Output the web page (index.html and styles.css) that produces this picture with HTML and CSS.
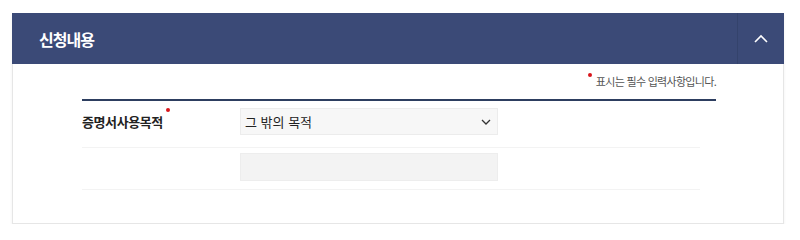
FILE: index.html
```html
<!DOCTYPE html>
<html lang="ko">
<head>
<meta charset="utf-8">
<link rel="stylesheet" href="styles.css">
</head>
<body>
<section class="card">
  <header class="card-head">
    <h2 class="card-title">신청내용</h2>
    <button class="toggle" type="button" aria-label="접기">
      <svg width="14" height="9" viewBox="0 0 14 9"><path d="M1 8 L7 2 L13 8" fill="none" stroke="#fff" stroke-width="1.6"/></svg>
    </button>
  </header>
  <div class="card-body">
    <p class="note"><span class="req"></span>표시는 필수 입력사항입니다.</p>
    <div class="form">
      <div class="row">
        <div class="label">증명서사용목적<span class="req req-label"></span></div>
        <div class="field">
          <div class="select">
            <span>그 밖의 목적</span>
            <svg width="10" height="6" viewBox="0 0 10 6"><path d="M1 1 L5 5 L9 1" fill="none" stroke="#333" stroke-width="1.3"/></svg>
          </div>
        </div>
      </div>
      <div class="row row-2">
        <div class="label"></div>
        <div class="field">
          <div class="input"></div>
        </div>
      </div>
    </div>
  </div>
</section>
</body>
</html>
```
FILE: styles.css
```css
* { box-sizing: border-box; }
html, body { margin: 0; padding: 0; background: #fff; }
body {
  font-family: "Noto Sans CJK KR", "Noto Sans", sans-serif;
  color: #222;
  padding-top: 13px;
}
.card {
  margin-left: 12px;
  width: 772px;
  border: 1px solid #e6e6e6;
  border-top: none;
  box-shadow: 0 2px 3px rgba(0,0,0,0.06);
  padding-bottom: 33px;
}
.card-head {
  height: 51px;
  background: #3b4a77;
  display: flex;
  align-items: center;
  justify-content: space-between;
  margin: 0 -1px;
}
.card-title {
  margin: 0 0 0 27px;
  font-size: 16px;
  font-weight: 700;
  color: #fff;
  letter-spacing: -1px;
}
.toggle {
  width: 47px;
  height: 51px;
  border: none;
  border-left: 1px solid #34436c;
  background: transparent;
  display: flex;
  align-items: center;
  justify-content: center;
  padding: 0;
}
.card-body {
  padding: 0 67px 0 69px;
}
.note {
  margin: 9px 0 0;
  text-align: right;
  font-size: 11px;
  line-height: 16px;
  color: #555;
  letter-spacing: -0.7px;
}
.req {
  display: inline-block;
  width: 4px;
  height: 4px;
  border-radius: 50%;
  background: #d9161c;
  vertical-align: top;
  margin: 0 4px 0 0;
}
.form {
  margin-top: 10px;
  border-top: 2px solid #2d3e60;
}
.row {
  display: flex;
  align-items: center;
  padding: 7px 0 12px;
  border-bottom: 1px solid #f3f3f3;
  margin-right: 16px;
}
.row-2 { padding: 5px 0 8px; }
.label {
  width: 158px;
  font-size: 13px;
  font-weight: 700;
  color: #222;
  letter-spacing: -0.4px;
  position: relative;
}
.req-label {
  position: absolute;
  left: 84px;
  top: -4px;
}
.field { flex: 0 0 258px; }
.select {
  height: 27px;
  background: #f7f7f7;
  border: 1px solid #ececec;
  display: flex;
  align-items: center;
  justify-content: space-between;
  padding: 0 6px 0 4px;
  font-size: 13px;
  color: #222;
}
.input {
  height: 28px;
  background: #f3f3f3;
  border: 1px solid #ededed;
}
```
